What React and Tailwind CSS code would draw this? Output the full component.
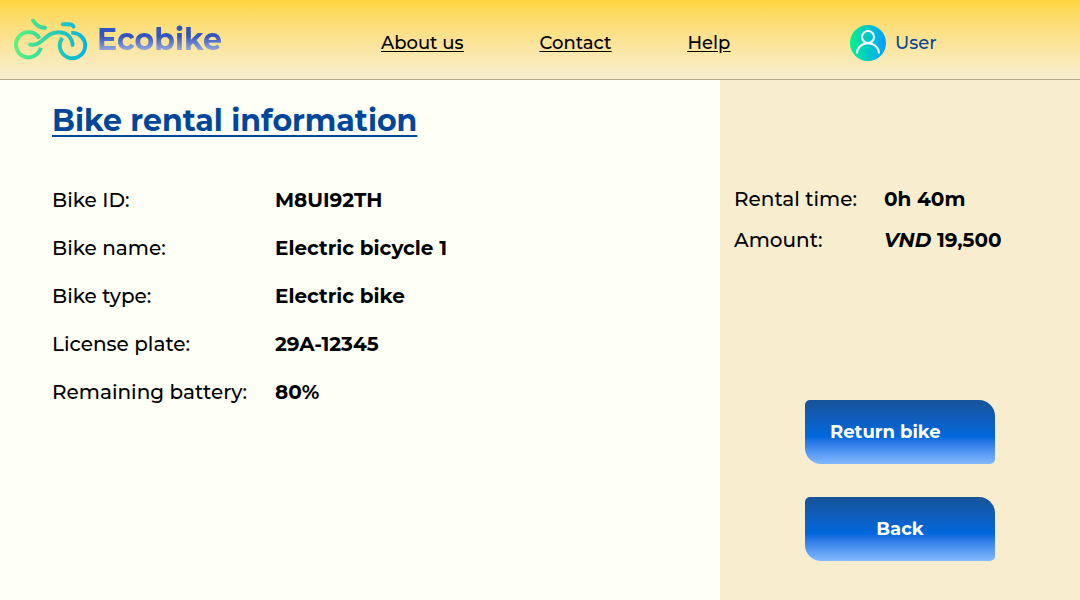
import React from "react";

const details = [
  { label: "Bike ID:", value: "M8UI92TH" },
  { label: "Bike name:", value: "Electric bicycle 1" },
  { label: "Bike type:", value: "Electric bike" },
  { label: "License plate:", value: "29A-12345" },
  { label: "Remaining battery:", value: "80%" },
];

function BikeLogo() {
  return (
    <svg width="76" height="41" viewBox="0 0 76 41" fill="none" aria-hidden="true">
      <defs>
        <linearGradient id="bike" gradientUnits="userSpaceOnUse" x1="1" y1="26" x2="75" y2="26">
          <stop offset="0" stopColor="#5cf578" />
          <stop offset="0.55" stopColor="#25cdb5" />
          <stop offset="1" stopColor="#00b3e6" />
        </linearGradient>
      </defs>
      <g stroke="url(#bike)" strokeWidth="3.9">
        <path d="M26.5 19.5A12.6 12.6 0 1 0 27.8 28.8" />
        <path d="M49.3 18.9A12.7 12.7 0 1 0 58.3 13.9" />
        <path d="M17 25.5C30 27.6 31 13.4 45 13.2C54 13.1 59 18.6 59.6 26" strokeLinecap="round" />
        <path d="M19.8 1C22.5 5.7 25.5 8.9 32 8.7" strokeLinecap="round" />
        <path d="M49.8 5.2H55.5C58.2 5.2 59.5 5.8 60.6 7.6" strokeLinecap="round" />
      </g>
    </svg>
  );
}

function UserIcon() {
  return (
    <svg width="36" height="36" viewBox="0 0 36 36" fill="none" aria-hidden="true">
      <defs>
        <linearGradient id="avatar" x1="0" y1="0" x2="1" y2="0">
          <stop offset="0" stopColor="#00f38d" />
          <stop offset="1" stopColor="#009eff" />
        </linearGradient>
      </defs>
      <circle cx="18" cy="18" r="18" fill="url(#avatar)" />
      <circle cx="18" cy="12" r="6" stroke="white" strokeWidth="2" />
      <path d="M7 28.5C7 22.5 11.8 18.3 18 18.3S29 22.5 29 28.5" stroke="white" strokeWidth="2" />
    </svg>
  );
}

const buttonStyle =
  "h-16 w-[190px] cursor-pointer rounded-tl-[5px] rounded-tr-[16px] rounded-br-[5px] rounded-bl-[16px] bg-linear-to-b from-[#16539a] via-[#0068de] via-[58%] to-[#83b9ff] text-lg font-bold text-white";

export default function App() {
  return (
    <div className="flex min-h-screen flex-col bg-[#fefff5] font-['Montserrat','Inter',sans-serif] text-black">
      <header className="grid h-20 grid-cols-[381fr_469fr_230fr] items-center border-b border-[#b5a98a] bg-linear-to-b from-[#ffd53d] to-[#f8efd0]">
        <a href="#home" className="flex items-center gap-2 pl-[13px]">
          <BikeLogo />
          <span className="bg-linear-to-b from-[#3353bd] from-40% to-[#b4bde0] to-85% bg-clip-text text-[30px] leading-10 font-bold text-transparent">
            Ecobike
          </span>
        </a>
        <nav className="flex gap-[76px] pt-[6px] text-lg font-medium underline underline-offset-2">
          <a href="#about">About us</a>
          <a href="#contact">Contact</a>
          <a href="#help">Help</a>
        </nav>
        <a href="#user" className="flex items-center gap-[9px] pt-[6px] text-lg font-medium text-[#0b4792]">
          <UserIcon />
          User
        </a>
      </header>
      <main className="grid flex-1 grid-cols-[2fr_1fr]">
        <section className="pt-[21px] pl-[52px]">
          <h1 className="text-[30px] leading-10 font-bold text-[#004799] underline decoration-2 underline-offset-4">
            Bike rental information
          </h1>
          <dl className="pt-[35px] text-xl">
            {details.map(({ label, value }) => (
              <div key={label} className="grid h-12 grid-cols-[223px_1fr] items-center">
                <dt className="font-medium">{label}</dt>
                <dd className="font-bold">{value}</dd>
              </div>
            ))}
          </dl>
        </section>
        <aside className="flex flex-col justify-between bg-[#f8eecf] pt-[98px] pb-[39px]">
          <dl className="pl-[14px] text-xl">
            <div className="grid h-[41px] grid-cols-[150px_1fr] items-center">
              <dt className="font-medium">Rental time:</dt>
              <dd className="font-bold">0h 40m</dd>
            </div>
            <div className="grid h-[41px] grid-cols-[150px_1fr] items-center">
              <dt className="font-medium">Amount:</dt>
              <dd className="font-bold">
                <i>VND</i> 19,500
              </dd>
            </div>
          </dl>
          <div className="flex flex-col items-center gap-[33px]">
            <button type="button" className={buttonStyle + " pl-[25px] text-left"}>
              Return bike
            </button>
            <button type="button" className={buttonStyle}>
              Back
            </button>
          </div>
        </aside>
      </main>
    </div>
  );
}
